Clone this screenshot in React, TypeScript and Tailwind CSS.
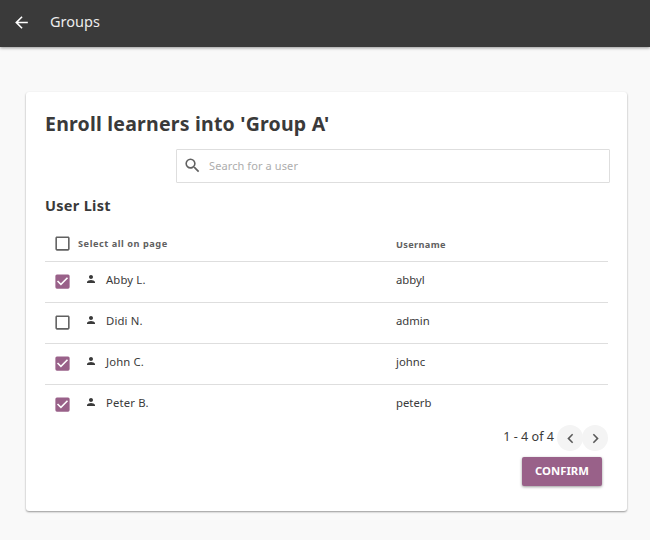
import React, { useState } from 'react';
import {
  MdArrowBack,
  MdCheckBox,
  MdCheckBoxOutlineBlank,
  MdChevronLeft,
  MdChevronRight,
  MdPerson,
  MdSearch,
} from 'react-icons/md';

type User = { name: string; username: string };

const users: User[] = [
  { name: 'Abby L.', username: 'abbyl' },
  { name: 'Didi N.', username: 'admin' },
  { name: 'John C.', username: 'johnc' },
  { name: 'Peter B.', username: 'peterb' },
];

function Checkbox({ checked, label, onToggle }: { checked: boolean; label: string; onToggle: () => void }) {
  return (
    <button
      type="button"
      role="checkbox"
      aria-checked={checked}
      aria-label={label}
      onClick={onToggle}
      className="flex size-5 shrink-0 items-center justify-center"
    >
      {checked ? (
        <MdCheckBox className="size-[19px] text-[#996189]" />
      ) : (
        <MdCheckBoxOutlineBlank className="size-[19px] text-[#616161]" />
      )}
    </button>
  );
}

function PageButton({ label, children }: { label: string; children: React.ReactNode }) {
  return (
    <button
      type="button"
      aria-label={label}
      className="flex size-[26px] items-center justify-center rounded-full bg-[#f4f4f4] text-[#5a5a5a]"
    >
      {children}
    </button>
  );
}

export default function App() {
  const [selected, setSelected] = useState<string[]>(['abbyl', 'johnc', 'peterb']);
  const allSelected = selected.length === users.length;

  const toggle = (username: string) =>
    setSelected((s) => (s.includes(username) ? s.filter((u) => u !== username) : [...s, username]));

  return (
    <div className="flex h-[540px] w-[650px] flex-col bg-[#f9f9f9] font-['Noto_Sans',sans-serif] text-[#3a3a3a]">
      <header className="flex h-[47px] shrink-0 items-center bg-[#3a3a3a] pb-[3px] pl-3 text-white shadow-[0_1px_3px_rgba(0,0,0,0.4)]">
        <MdArrowBack className="size-[19px]" />
        <span className="mb-[2px] ml-[19px] text-[14.5px] leading-5 text-[#ececec]">Groups</span>
      </header>

      <main className="mt-[45px] ml-[26px] flex h-[419px] w-[601px] flex-col rounded-[3px] bg-white pr-[19px] pl-[19px] shadow-[0_1px_2px_rgba(0,0,0,0.4)]">
        <h1 className="mt-[18px] text-[19.5px] leading-7 font-bold tracking-[0.215px]">
          Enroll learners into &apos;Group A&apos;
        </h1>

        <div className="mt-[11px] -mr-[2px] flex h-[34px] w-[434px] shrink-0 items-center self-end rounded-[1px] border border-[#dedede] pl-[6px]">
          <MdSearch className="mb-px size-[19px] text-[#616161]" />
          <input
            placeholder="Search for a user"
            className="ml-[7px] flex-1 bg-transparent text-[11px] leading-4 tracking-[0.1px] outline-none placeholder:text-[#adadad]"
          />
        </div>

        <h2 className="mt-[12px] text-[14.5px] leading-5 font-bold tracking-[0.3px]">User List</h2>

        <div className="mt-[10px] flex w-[563px] flex-col">
          <div className="flex h-[37px] items-center border-b border-[#dedede] pl-[7px] text-[9.2px] leading-4 font-bold text-[#616161]">
            <Checkbox
              checked={allSelected}
              label="Select all on page"
              onToggle={() => setSelected(allSelected ? [] : users.map((u) => u.username))}
            />
            <span className="ml-[6px] w-[318px] pt-[2px] tracking-[0.54px]">Select all on page</span>
            <span className="pt-[3px] tracking-[0.34px]">Username</span>
          </div>
          {users.map((user) => (
            <div
              key={user.username}
              className="flex h-[41px] items-center border-b border-[#dedede] pb-[2px] pl-[7px] text-[11.3px] leading-4 last:h-10 last:border-b-0"
            >
              <Checkbox
                checked={selected.includes(user.username)}
                label={user.name}
                onToggle={() => toggle(user.username)}
              />
              <MdPerson className="mb-[4px] ml-[13px] size-3" />
              <span className="mb-[2px] ml-[9px] w-[290px] tracking-[0.15px]">{user.name}</span>
              <span className="mb-[2px]">{user.username}</span>
            </div>
          ))}
        </div>

        <div className="flex h-[26px] w-[563px] items-center justify-end">
          <span className="mr-[3px] mb-[2px] text-[12.6px] leading-5">1 - 4 of 4</span>
          <div className="flex -space-x-px">
            <PageButton label="Previous results">
              <MdChevronLeft className="size-[19px]" />
            </PageButton>
            <PageButton label="Next results">
              <MdChevronRight className="size-[19px]" />
            </PageButton>
          </div>
        </div>

        <button
          type="button"
          className="mt-[6px] mr-[6px] flex h-[29px] w-[80px] items-center justify-center self-end rounded-[2px] bg-[#996189] pb-[2px] text-[11.3px] leading-4 font-bold text-white shadow-[0_1px_3px_rgba(0,0,0,0.4)]"
        >
          CONFIRM
        </button>
      </main>
    </div>
  );
}
